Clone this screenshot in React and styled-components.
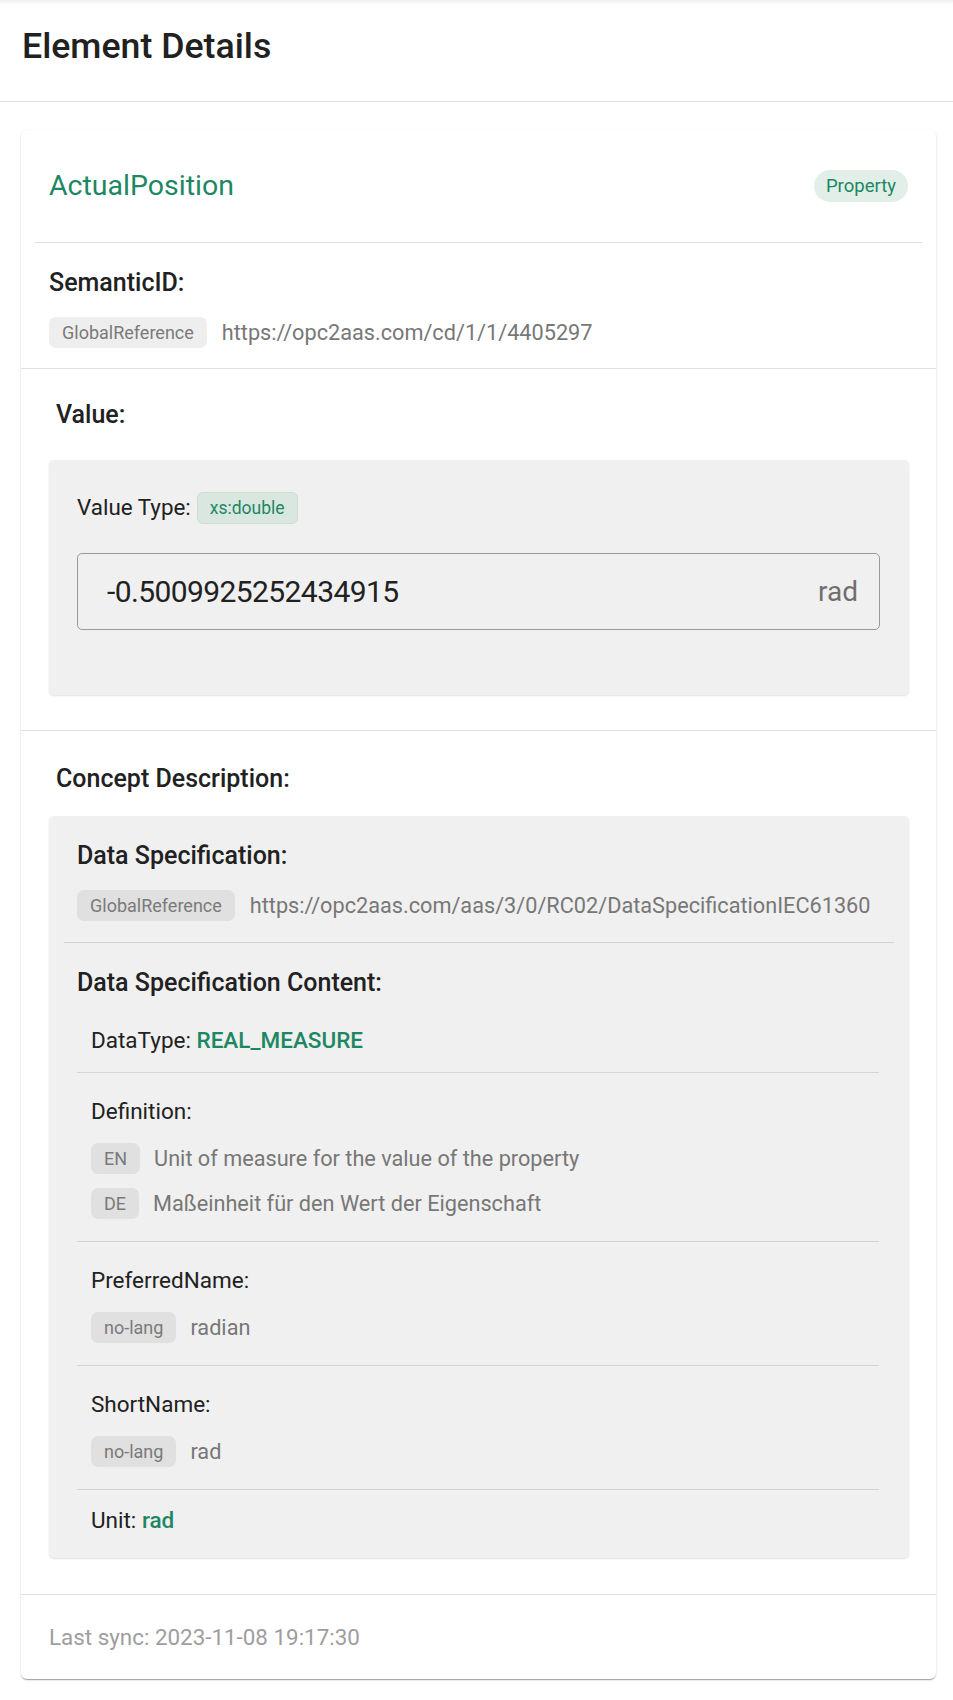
import React from 'react'
import styled, { createGlobalStyle } from 'styled-components'

const green = '#1d8763'

const GlobalStyle = createGlobalStyle`
  * { box-sizing: border-box; }
  body {
    margin: 0;
    background: #ffffff;
    font-family: Roboto, "Liberation Sans", Arial, sans-serif;
    color: #212121;
  }
`

const Header = styled.header`
  height: 102px;
  padding: 25px 22px 0;
  border-bottom: 1px solid #e0e0e0;
  box-shadow: inset 0 6px 6px -6px rgba(0, 0, 0, 0.12);
`

const PageTitle = styled.h1`
  margin: 0;
  font-size: 35.7px;
  line-height: 1.2;
  font-weight: 500;
  color: #212121;
`

const Main = styled.main`
  padding: 28px 17px 21px 21px;
`

const Card = styled.article`
  background: #fff;
  border-radius: 6px;
  box-shadow: 0 2px 1px -1px rgba(0, 0, 0, 0.2), 0 1px 1px 0 rgba(0, 0, 0, 0.14),
    0 1px 3px 0 rgba(0, 0, 0, 0.12);
`

const TitleRow = styled.div`
  margin: 0 14px;
  padding: 0 14px;
  height: 113px;
  display: flex;
  align-items: center;
  justify-content: space-between;
  border-bottom: 1px solid #e0e0e0;
`

const ElementName = styled.h2`
  margin: 0;
  font-size: 28.5px;
  line-height: 1.2;
  font-weight: 400;
  color: ${green};
`

const TypePill = styled.span`
  height: 32px;
  padding: 0 12px;
  border-radius: 16px;
  display: inline-flex;
  align-items: center;
  background: #e2efe9;
  color: ${green};
  font-size: 18.5px;
`

const Section = styled.section`
  padding: ${p => p.$pad};
  border-bottom: 1px solid #e0e0e0;
`

const SectionLabel = styled.h3`
  margin: 0;
  padding-left: ${p => (p.$indent ? '7px' : '0')};
  font-size: 25px;
  line-height: 36px;
  font-weight: 500;
  color: #212121;
`

const RefRow = styled.div`
  display: flex;
  align-items: center;
  gap: 15px;
  margin-top: ${p => p.$top};
`

const Chip = styled.span`
  height: 31px;
  padding: 0 13px;
  border-radius: 7px;
  display: inline-flex;
  align-items: center;
  font-size: 18px;
  color: #7a7a7a;
  background: ${p => (p.$onGray ? '#e0e0e0' : '#eeeeee')};
  flex-shrink: 0;
`

const GrayText = styled.span`
  font-size: 21.7px;
  line-height: 31px;
  color: #777;
`

const Panel = styled.div`
  margin-top: ${p => p.$top};
  background: #f0f0f0;
  border-radius: 5px;
  padding: ${p => p.$pad};
  box-shadow: 0 1px 2px rgba(0, 0, 0, 0.12);
`

const TypeRow = styled.div`
  display: flex;
  align-items: center;
  gap: 6px;
  font-size: 22.4px;
  line-height: 1.5;
  color: #212121;
`

const TypeChip = styled.span`
  height: 32px;
  padding: 0 12px;
  border-radius: 6px;
  display: inline-flex;
  align-items: center;
  font-size: 17.5px;
  color: ${green};
  background: #d9e7e0;
  border: 1px solid #cddcd4;
`

const ValueField = styled.div`
  margin-top: 28px;
  height: 77px;
  padding: 0 21px 0 29px;
  border: 1px solid #9a9a9a;
  border-radius: 5px;
  display: flex;
  align-items: center;
  justify-content: space-between;
`

const ValueText = styled.span`
  font-size: ${p => (p.$unit ? '28px' : '30px')};
  letter-spacing: ${p => (p.$unit ? '0' : '-0.6px')};
  color: ${p => (p.$unit ? '#6f6f6f' : '#212121')};
`

const SpecBlock = styled.div`
  padding: ${p => p.$pad};
  border-bottom: ${p => (p.$divider ? '1px solid #d4d4d4' : 'none')};
`

const ContentList = styled.div`
  margin-top: 9px;
`

const Row = styled.div`
  padding: ${p => (p.$inline ? '14px 14px 15px' : '22px 14px')};
  border-bottom: ${p => (p.$last ? 'none' : '1px solid #d4d4d4')};
  font-size: 22.5px;
  line-height: 33px;
  color: #212121;
`

const Strong = styled.span`
  color: ${green};
  font-weight: 500;
`

const LangList = styled.div`
  margin-top: 15px;
  display: flex;
  flex-direction: column;
  gap: 14px;
`

const LangLine = styled.div`
  display: flex;
  align-items: center;
  gap: 14px;
`

const Footer = styled.div`
  padding: 26px 28px 25px;
  font-size: 22.4px;
  line-height: 33px;
  color: #9e9e9e;
`

const LangEntries = ({ items }) => (
  <LangList>
    {items.map(([lang, text]) => (
      <LangLine key={lang + text}>
        <Chip $onGray>{lang}</Chip>
        <GrayText>{text}</GrayText>
      </LangLine>
    ))}
  </LangList>
)

export default function App() {
  return (
    <>
      <GlobalStyle />
      <Header>
        <PageTitle>Element Details</PageTitle>
      </Header>
      <Main>
        <Card>
          <TitleRow>
            <ElementName>ActualPosition</ElementName>
            <TypePill>Property</TypePill>
          </TitleRow>

          <Section $pad="22px 28px 20px">
            <SectionLabel>SemanticID:</SectionLabel>
            <RefRow $top="16px">
              <Chip>GlobalReference</Chip>
              <GrayText>https://opc2aas.com/cd/1/1/4405297</GrayText>
            </RefRow>
          </Section>

          <Section $pad="28px 27px 35px 28px">
            <SectionLabel $indent>Value:</SectionLabel>
            <Panel $top="27px" $pad="31px 29px 65px 28px">
              <TypeRow>
                Value Type:
                <TypeChip>xs:double</TypeChip>
              </TypeRow>
              <ValueField>
                <ValueText>-0.5009925252434915</ValueText>
                <ValueText $unit>rad</ValueText>
              </ValueField>
            </Panel>
          </Section>

          <Section $pad="30px 27px 36px 28px">
            <SectionLabel $indent>Concept Description:</SectionLabel>
            <Panel $top="19px" $pad="0 15px 6px">
              <SpecBlock $divider $pad="22px 13px 21px">
                <SectionLabel>Data Specification:</SectionLabel>
                <RefRow $top="16px">
                  <Chip $onGray>GlobalReference</Chip>
                  <GrayText>https://opc2aas.com/aas/3/0/RC02/DataSpecificationIEC61360</GrayText>
                </RefRow>
              </SpecBlock>
              <SpecBlock $pad="22px 15px 0 13px">
                <SectionLabel>Data Specification Content:</SectionLabel>
                <ContentList>
                  <Row $inline>
                    DataType: <Strong>REAL_MEASURE</Strong>
                  </Row>
                  <Row>
                    Definition:
                    <LangEntries
                      items={[
                        ['EN', 'Unit of measure for the value of the property'],
                        ['DE', 'Maßeinheit für den Wert der Eigenschaft'],
                      ]}
                    />
                  </Row>
                  <Row>
                    PreferredName:
                    <LangEntries items={[['no-lang', 'radian']]} />
                  </Row>
                  <Row>
                    ShortName:
                    <LangEntries items={[['no-lang', 'rad']]} />
                  </Row>
                  <Row $inline $last>
                    Unit: <Strong>rad</Strong>
                  </Row>
                </ContentList>
              </SpecBlock>
            </Panel>
          </Section>

          <Footer>Last sync: 2023-11-08 19:17:30</Footer>
        </Card>
      </Main>
    </>
  )
}
